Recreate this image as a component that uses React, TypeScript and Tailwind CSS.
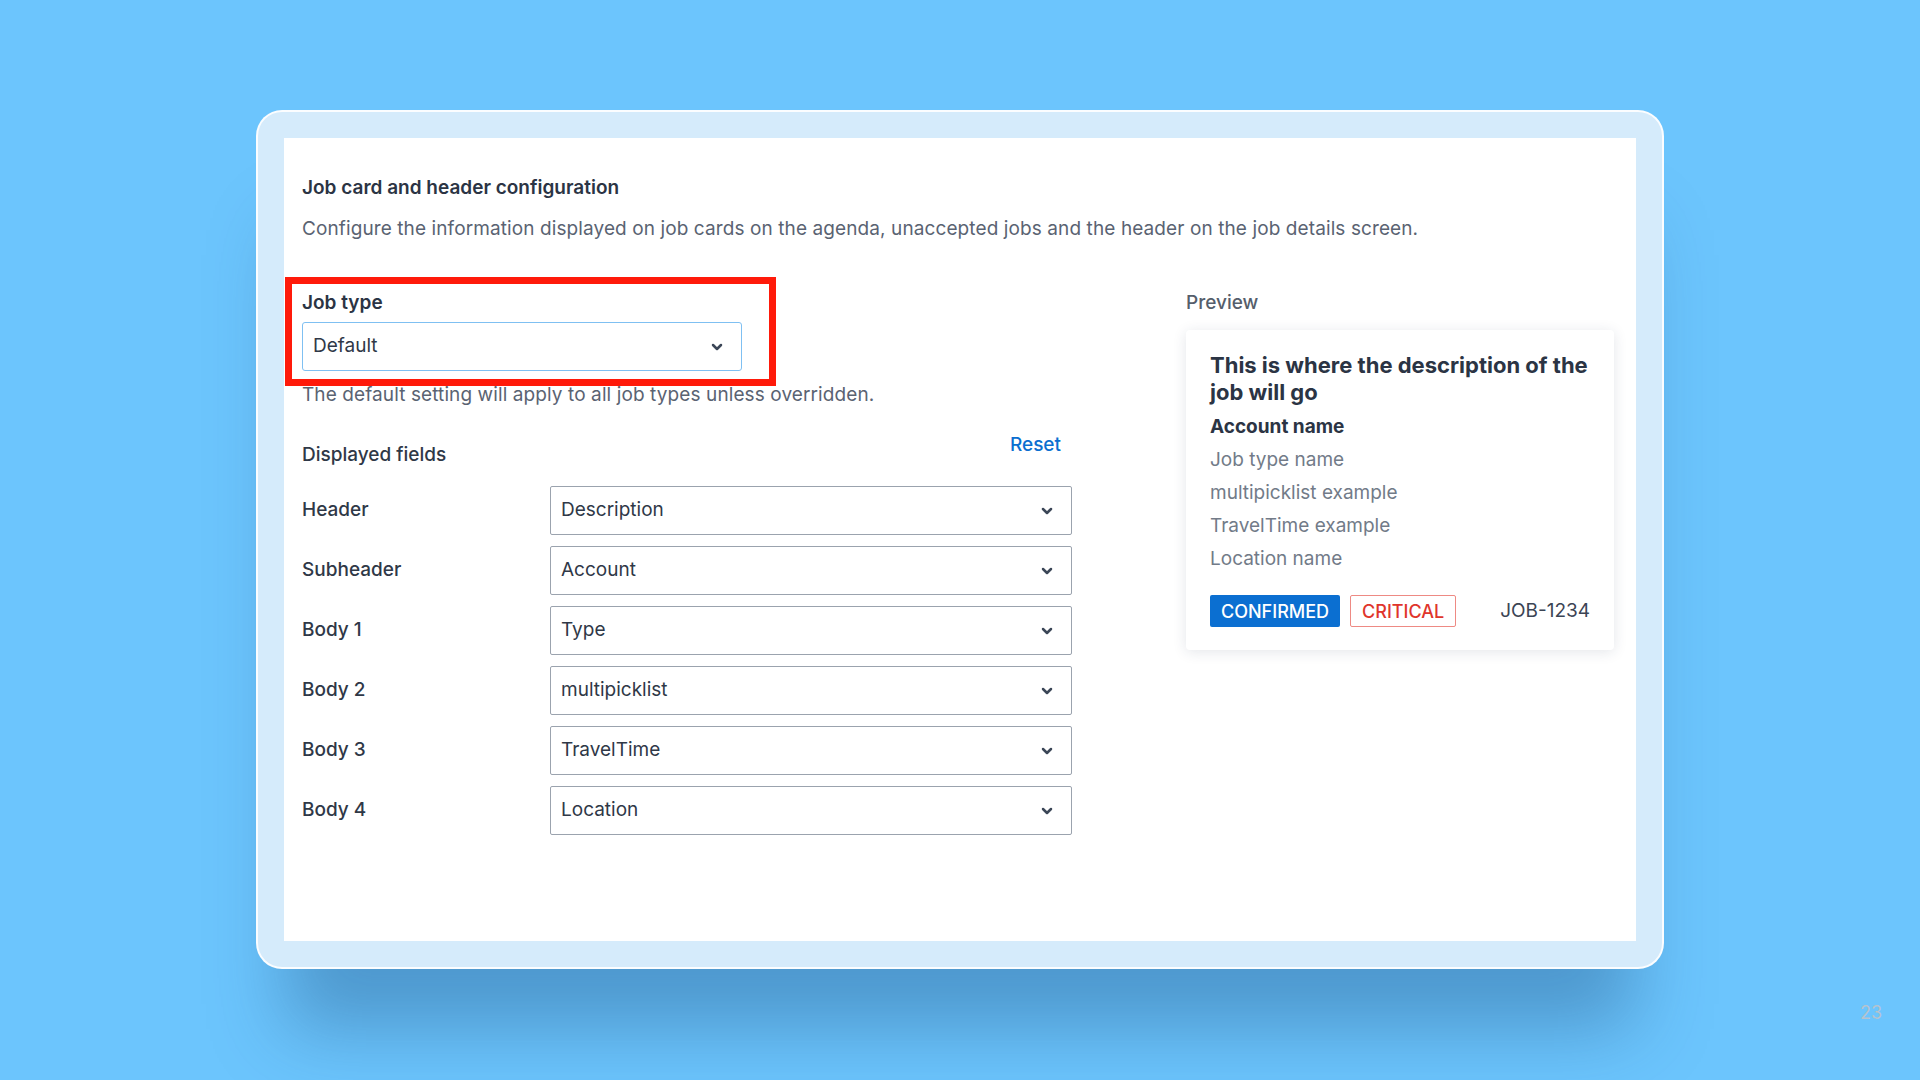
import React from "react";

function Chevron() {
  return (
    <svg width="12" height="8" viewBox="0 0 12 8" fill="none" aria-hidden="true">
      <path d="M2 2 L6 6 L10 2" stroke="#3b4657" strokeWidth="2.5" strokeLinecap="round" strokeLinejoin="round" />
    </svg>
  );
}

function Select({ value, className }: { value: string; className: string }) {
  return (
    <div className={`flex h-[49px] items-center justify-between bg-white pl-[10px] pr-[18px] text-[19px] text-[#2f3847] ${className}`}>
      <span>{value}</span>
      <Chevron />
    </div>
  );
}

const rows: [string, string][] = [
  ["Header", "Description"],
  ["Subheader", "Account"],
  ["Body 1", "Type"],
  ["Body 2", "multipicklist"],
  ["Body 3", "TravelTime"],
  ["Body 4", "Location"],
];

export default function App() {
  return (
    <div
      className="relative flex h-[1080px] w-[1920px] justify-center overflow-hidden bg-[#6cc5fd] pt-[110px]"
      style={{ fontFamily: "Inter, 'Noto Sans', sans-serif" }}
    >
      <div className="h-[859px] w-[1408px] rounded-[26px] border-2 border-white/90 bg-[#d5ebfb] p-[26px] shadow-[0_90px_70px_-30px_rgba(30,80,130,0.38)]">
        <div className="h-full w-full bg-white px-[18px] pt-[36px]">
          <h1 className="text-[19px] font-semibold leading-[28px] text-[#2b3444]">Job card and header configuration</h1>
          <p className="mt-[13px] text-[19px] leading-[28px] tracking-[0.1px] text-[#5a6372]">
            Configure the information displayed on job cards on the agenda, unaccepted jobs and the header on the job details screen.
          </p>

          <div className="mt-[46px] flex">
            {/* left column */}
            <div className="w-[770px]">
              <div className="relative w-[440px]">
                <div className="text-[19px] font-semibold leading-[28px] text-[#2b3444]">Job type</div>
                <Select value="Default" className="mt-[5px] rounded-[3px] border border-[#7fc0f2]" />
                <div className="pointer-events-none absolute left-[-17px] top-[-12px] h-[109px] w-[491px] border-[7px] border-[#ff1a0a]" />
              </div>
              <p className="mt-[10px] text-[19px] leading-[28px] tracking-[0.1px] text-[#5a6372]">
                The default setting will apply to all job types unless overridden.
              </p>

              <div className="mt-[22px] flex items-start justify-between pr-[11px]">
                <div className="mt-[10px] text-[19px] font-medium leading-[28px] text-[#2f3847]">Displayed fields</div>
                <div className="text-[19px] font-medium leading-[28px] text-[#0b6fd0]">Reset</div>
              </div>

              <div className="mt-[17px] flex flex-col gap-[11px]">
                {rows.map(([label, value]) => (
                  <div key={label} className="flex items-center">
                    <div className="w-[248px] text-[19px] font-medium text-[#2f3847]">{label}</div>
                    <Select value={value} className="w-[522px] rounded-[2px] border border-[#9ba3ae]" />
                  </div>
                ))}
              </div>
            </div>

            {/* right column */}
            <div className="ml-[114px] w-[428px]">
              <div className="text-[19px] font-medium leading-[28px] text-[#555e6b]">Preview</div>
              <div className="mt-[13px] rounded-[4px] bg-white px-[24px] pb-[23px] pt-[22px] shadow-[0_2px_14px_rgba(30,50,80,0.12)]">
                <div className="text-[22px] font-bold leading-[27px] text-[#2b3444]">
                  This is where the description of the job will go
                </div>
                <div className="mt-[4px] text-[19px] font-bold leading-[33px] text-[#2b3444]">Account name</div>
                <div className="text-[19px] leading-[33px] text-[#727b88]">Job type name</div>
                <div className="text-[19px] leading-[33px] text-[#727b88]">multipicklist example</div>
                <div className="text-[19px] leading-[33px] text-[#727b88]">TravelTime example</div>
                <div className="text-[19px] leading-[33px] text-[#727b88]">Location name</div>
                <div className="mt-[20px] flex items-center">
                  <span className="flex h-[32px] items-center rounded-[2px] bg-[#0b6fd1] px-[11px] text-[18px] font-medium text-white">
                    CONFIRMED
                  </span>
                  <span className="ml-[10px] flex h-[32px] items-center rounded-[2px] border border-[#ee8a84] px-[11px] text-[18px] font-medium text-[#e0352b]">
                    CRITICAL
                  </span>
                  <span className="ml-auto text-[19px] text-[#3b4454]">JOB-1234</span>
                </div>
              </div>
            </div>
          </div>
        </div>
      </div>
      <div className="absolute left-[1860px] top-[999px] text-[18px] text-[#b5c3cf]">23</div>
    </div>
  );
}
